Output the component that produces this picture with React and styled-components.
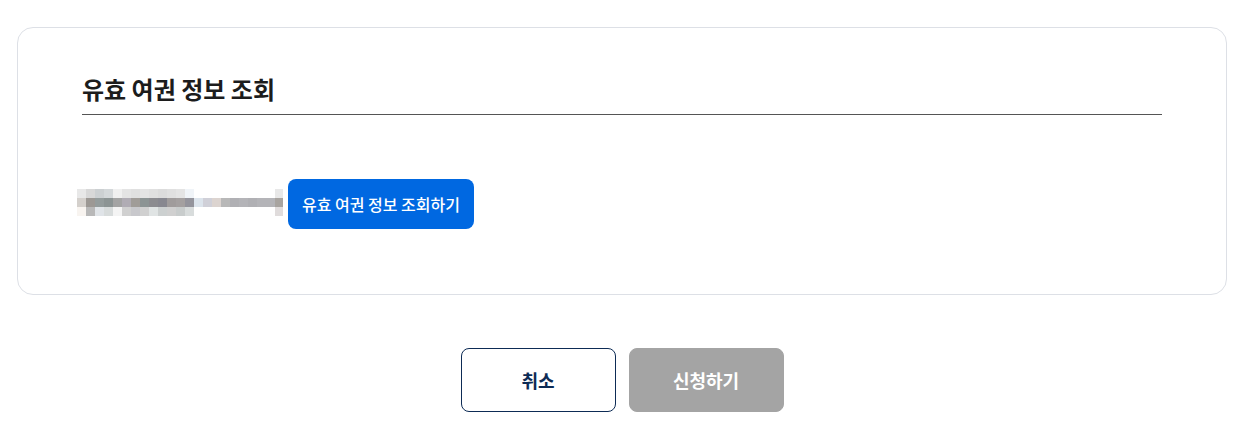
import { createGlobalStyle, styled } from "styled-components";

const GlobalStyle = createGlobalStyle`
  * {
    box-sizing: border-box;
  }
  body {
    margin: 0;
    background: #fff;
    font-family: "Noto Sans CJK KR", "Noto Sans", sans-serif;
    color: #1a1a1a;
  }
`;

const Page = styled.div`
  padding: 27px 13px 0 17px;
`;

const Card = styled.section`
  border: 1px solid #dde0e6;
  border-radius: 16px;
  padding: 44px 64px 65px 64px;
`;

const Title = styled.h2`
  margin: 0;
  font-size: 24px;
  line-height: 34px;
  font-weight: 700;
  color: #1c1c1c;
  padding: 0 0 8px 0;
  border-bottom: 1px solid #555;
`;

const Row = styled.div`
  display: flex;
  align-items: center;
  margin-top: 64px;
`;

const Masked = styled.svg`
  display: block;
  width: 206px;
  height: 27px;
  margin: 0 5px 4px -5px;
`;

const LookupButton = styled.button`
  height: 50px;
  padding: 0 14px;
  border: 0;
  border-radius: 8px;
  background: #0068e1;
  color: #fff;
  font-family: inherit;
  font-size: 16px;
  font-weight: 500;
  cursor: pointer;
`;

const Actions = styled.div`
  display: flex;
  justify-content: center;
  gap: 13px;
  margin-top: 53px;
`;

const ActionButton = styled.button`
  width: 155px;
  height: 64px;
  border-radius: 8px;
  font-family: inherit;
  font-size: 18px;
  font-weight: 700;
  cursor: pointer;
  border: 1px solid ${(p) => (p.$primary ? "#a4a4a4" : "#0d2b55")};
  background: ${(p) => (p.$primary ? "#a4a4a4" : "#fff")};
  color: ${(p) => (p.$primary ? "#fff" : "#0d2b55")};
`;

const rows = [
  ["#e8e8e8", "#d8d8d8", "#ccd0d2", "#d4d8da", "#f0f0f0", "#e4e4e4", "#e0e0e0", "#e4e4e4", "#e0e0e0", "#dcdcdc", "#e0e0e0", "#e4e4e4", "#f0f4f8", null, null, null, null, null, null, null, null, null, "#e8e8e8", null],
  ["#d4d0cc", "#9c9894", "#949c9c", "#8c9494", "#a4a4a4", "#b0acb4", "#a09c98", "#8c9494", "#8c8c90", "#888890", "#a09c9c", "#a4a0a0", "#94949c", "#dce4ec", "#d0d0d8", "#dcd4d0", "#b8b8b8", "#b0b0b4", "#b4b4b8", "#b0b0b4", "#b4b4b8", "#b4b4b8", "#a8a4a0", "#dce8f0"],
  ["#f8f4f0", "#b8b8b8", "#e0e4e8", "#d8dcdc", "#f4f4f4", "#d0d0d0", "#c8c8cc", "#d0d0d0", "#e0e4e4", "#ccd0d0", "#d0d0d0", "#c8cccc", "#d8dcdc", null, null, null, null, null, null, null, null, null, "#e0dcdc", "#f4f8fc"],
];

const MaskedNumber = () => (
  <Masked viewBox="0 0 206 27" aria-label="가려진 여권 번호">
    {rows.map((row, r) =>
      row.map((c, i) =>
        c ? <rect key={`${r}-${i}`} x={i * 9} y={r * 9} width="9" height="9" fill={c} /> : null
      )
    )}
  </Masked>
);

export default function App() {
  return (
    <>
      <GlobalStyle />
      <Page>
        <Card>
          <Title>유효 여권 정보 조회</Title>
          <Row>
            <MaskedNumber />
            <LookupButton type="button">유효 여권 정보 조회하기</LookupButton>
          </Row>
        </Card>
        <Actions>
          <ActionButton type="button">취소</ActionButton>
          <ActionButton type="button" $primary>
            신청하기
          </ActionButton>
        </Actions>
      </Page>
    </>
  );
}
